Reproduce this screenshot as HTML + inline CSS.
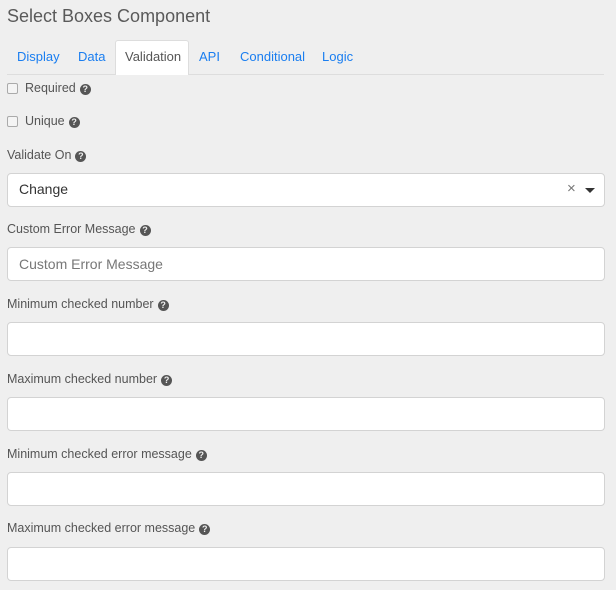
<!DOCTYPE html>
<html><head><style>
body{margin:0;width:616px;height:590px;background:#efefef;font-family:"Liberation Sans",Arial,sans-serif;position:relative;overflow:hidden;color:#555}
.a{position:absolute;white-space:nowrap}
.t{font-size:13px;color:#1a7ef0;top:49px}
.lbl{font-size:12.5px;color:#555;left:7px}
.q{display:inline-block;width:11px;height:11px;border-radius:50%;background:#555;color:#efefef;font-size:9px;font-weight:bold;text-align:center;line-height:11px;vertical-align:0px;margin-left:4px}
.in{position:absolute;left:7px;width:596px;height:32px;background:#fff;border:1px solid #d3d3d3;border-radius:4px}
.cb{position:absolute;left:7px;width:9px;height:9px;border:1px solid #aaa;border-radius:2px;background:#f4f4f4}
</style></head><body>
<div class="a" style="left:7px;top:6px;font-size:18px;color:#5a5a5a">Select Boxes Component</div>
<div class="a" style="left:7px;top:74px;width:597px;height:1px;background:#ddd"></div>
<div class="a" style="left:115px;top:40px;width:72px;height:34px;background:#fff;border:1px solid #ddd;border-bottom:none;border-radius:3px 3px 0 0"></div>
<div class="a t" style="left:17px">Display</div>
<div class="a t" style="left:78px">Data</div>
<div class="a t" style="left:125px;color:#555">Validation</div>
<div class="a t" style="left:199px">API</div>
<div class="a t" style="left:240px">Conditional</div>
<div class="a t" style="left:322px">Logic</div>
<div class="cb" style="top:83px"></div>
<div class="a lbl" style="left:25px;top:81px">Required<span class="q">?</span></div>
<div class="cb" style="top:116px"></div>
<div class="a lbl" style="left:25px;top:114px">Unique<span class="q">?</span></div>
<div class="a lbl" style="top:148px">Validate On<span class="q">?</span></div>
<div class="in" style="top:173px"><span class="a" style="left:11px;top:7px;font-size:14px;color:#333">Change</span><span class="a" style="left:559px;top:6px;font-size:15px;color:#777">×</span><span class="a" style="left:577px;top:14px;width:0;height:0;border-left:5px solid transparent;border-right:5px solid transparent;border-top:5px solid #333"></span></div>
<div class="a lbl" style="top:222px">Custom Error Message<span class="q">?</span></div>
<div class="in" style="top:247px"><span class="a" style="left:11px;top:8px;font-size:14px;color:#777">Custom Error Message</span></div>
<div class="a lbl" style="top:297px">Minimum checked number<span class="q">?</span></div>
<div class="in" style="top:322px"></div>
<div class="a lbl" style="top:372px">Maximum checked number<span class="q">?</span></div>
<div class="in" style="top:397px"></div>
<div class="a lbl" style="top:447px">Minimum checked error message<span class="q">?</span></div>
<div class="in" style="top:472px"></div>
<div class="a lbl" style="top:521px">Maximum checked error message<span class="q">?</span></div>
<div class="in" style="top:547px"></div>
</body></html>
